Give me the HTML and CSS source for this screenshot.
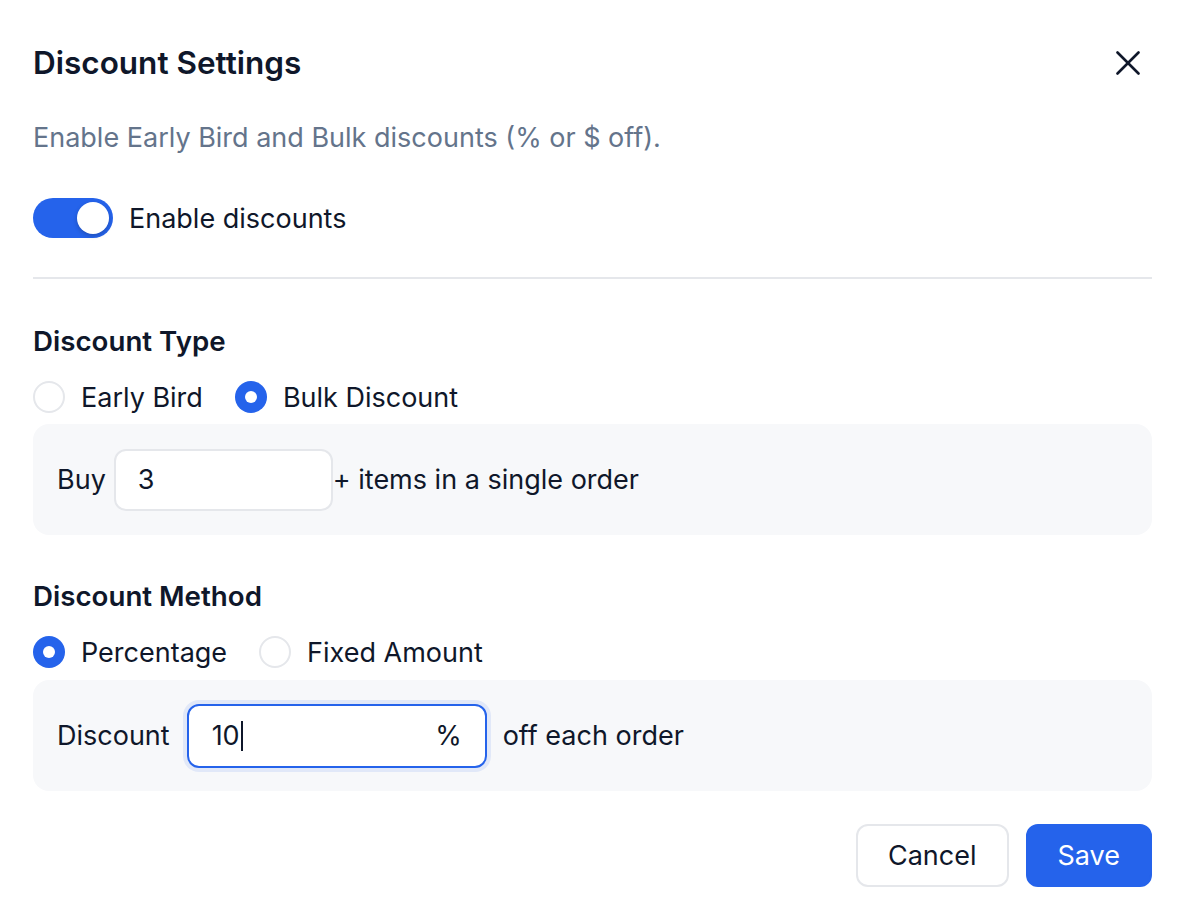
FILE: index.html
```html
<html>
  <head>
    <meta charset="utf-8" />
    <meta name="viewport" content="width=device-width, initial-scale=1.0" />
    <title>Discount Settings</title>
    <link rel="stylesheet" href="styles.css">
  </head>
  <body>
    <div class="modal">
      <div class="header">
        <div class="title">Discount Settings</div>
        <button class="close" aria-label="Close">
          <svg width="24" height="24" viewBox="0 0 24 24" fill="none" stroke="#0f172a" stroke-width="2.6" stroke-linecap="round">
            <path d="M1.5 1.5 22.5 22.5" />
            <path d="M22.5 1.5 1.5 22.5" />
          </svg>
        </button>
      </div>
      <div class="subtitle">Enable Early Bird and Bulk discounts (% or $ off).</div>

      <div class="toggle-row">
        <div class="toggle on"><span class="knob"></span></div>
        <span>Enable discounts</span>
      </div>

      <div class="divider"></div>

      <div class="section">
        <div class="section-title">Discount Type</div>
        <div class="radios">
          <label class="radio"><span class="dot"></span>Early Bird</label>
          <label class="radio checked"><span class="dot"></span>Bulk Discount</label>
        </div>
        <div class="box">
          <span class="lead">Buy</span>
          <div class="field small">3</div>
          <span>+ items in a single order</span>
        </div>
      </div>

      <div class="section second">
        <div class="section-title">Discount Method</div>
        <div class="radios">
          <label class="radio checked"><span class="dot"></span>Percentage</label>
          <label class="radio"><span class="dot"></span>Fixed Amount</label>
        </div>
        <div class="box">
          <span class="lead wide">Discount</span>
          <div class="field focus">
            <span>10</span><span class="caret"></span>
            <span class="unit">%</span>
          </div>
          <span class="tail">off each order</span>
        </div>
      </div>

      <div class="footer">
        <button class="btn">Cancel</button>
        <button class="btn primary">Save</button>
      </div>
    </div>
  </body>
</html>
```

FILE: styles.css
```css
* {
  margin: 0;
  padding: 0;
  box-sizing: border-box;
}
body {
  background: #fff;
  font-family: "Inter", "Noto Sans", sans-serif;
  color: #0f172a;
  font-size: 27px;
}
.modal {
  padding: 47px 36px 0 33px;
}
.header {
  display: flex;
  align-items: center;
  justify-content: space-between;
  height: 32px;
}
.title {
  font-size: 31.5px;
  font-weight: 600;
  line-height: 32px;
}
.close {
  border: none;
  background: none;
  width: 24px;
  height: 24px;
  margin-right: 12px;
  display: flex;
}
.subtitle {
  margin-top: 41px;
  line-height: 36px;
  color: #64748b;
}
.toggle-row {
  margin-top: 42px;
  display: flex;
  align-items: center;
  gap: 16px;
  height: 40px;
}
.toggle {
  width: 80px;
  height: 40px;
  border-radius: 20px;
  background: #e5e7eb;
  display: flex;
  align-items: center;
  padding: 0 4px;
}
.toggle.on {
  background: #2563eb;
  justify-content: flex-end;
}
.knob {
  width: 32px;
  height: 32px;
  border-radius: 50%;
  background: #fff;
  box-shadow: 0 2px 4px rgba(15, 23, 42, 0.25);
}
.divider {
  margin-top: 39px;
  height: 2px;
  background: #e5e7eb;
}
.section {
  margin-top: 44px;
}
.section.second {
  margin-top: 43px;
}
.section-title {
  font-size: 27.7px;
  font-weight: 600;
  line-height: 36px;
}
.radios {
  margin-top: 20px;
  display: flex;
  gap: 32px;
  height: 36px;
}
.radio {
  display: flex;
  align-items: center;
  gap: 16px;
}
.radio .dot {
  width: 32px;
  height: 32px;
  border-radius: 50%;
  border: 2px solid #e5e7eb;
  background: #fff;
  display: flex;
  align-items: center;
  justify-content: center;
}
.radio.checked .dot {
  border: none;
  background: #2563eb;
}
.radio.checked .dot::after {
  content: "";
  width: 12px;
  height: 12px;
  border-radius: 50%;
  background: #fff;
}
.box {
  margin-top: 9px;
  background: #f7f8fa;
  border-radius: 16px;
  height: 111px;
  padding: 0 24px;
  display: flex;
  align-items: center;
}
.second .box {
  margin-top: 10px;
}
.lead {
  margin-right: 8px;
}
.lead.wide {
  margin-right: 17px;
}
.field {
  height: 62px;
  border: 2px solid #e5e7eb;
  border-radius: 12px;
  background: #fff;
  display: flex;
  align-items: center;
  padding: 0 22px;
}
.field.small {
  width: 219px;
}
.field.focus {
  width: 300px;
  height: 64px;
  padding: 0 23px;
  border-color: #2563eb;
  box-shadow: 0 0 0 4px rgba(37, 99, 235, 0.1);
}
.caret {
  width: 2px;
  height: 30px;
  background: #0f172a;
  margin-left: 1px;
}
.unit {
  margin-left: auto;
}
.tail {
  margin-left: 16px;
}
.footer {
  margin-top: 33px;
  display: flex;
  justify-content: flex-end;
  gap: 17px;
}
.btn {
  font-family: inherit;
  font-size: 27px;
  color: #0f172a;
  height: 63px;
  padding: 0 30px;
  border-radius: 12px;
  border: 2px solid #e5e7eb;
  background: #fff;
}
.btn.primary {
  background: #2563eb;
  border-color: #2563eb;
  color: #fff;
}
```
